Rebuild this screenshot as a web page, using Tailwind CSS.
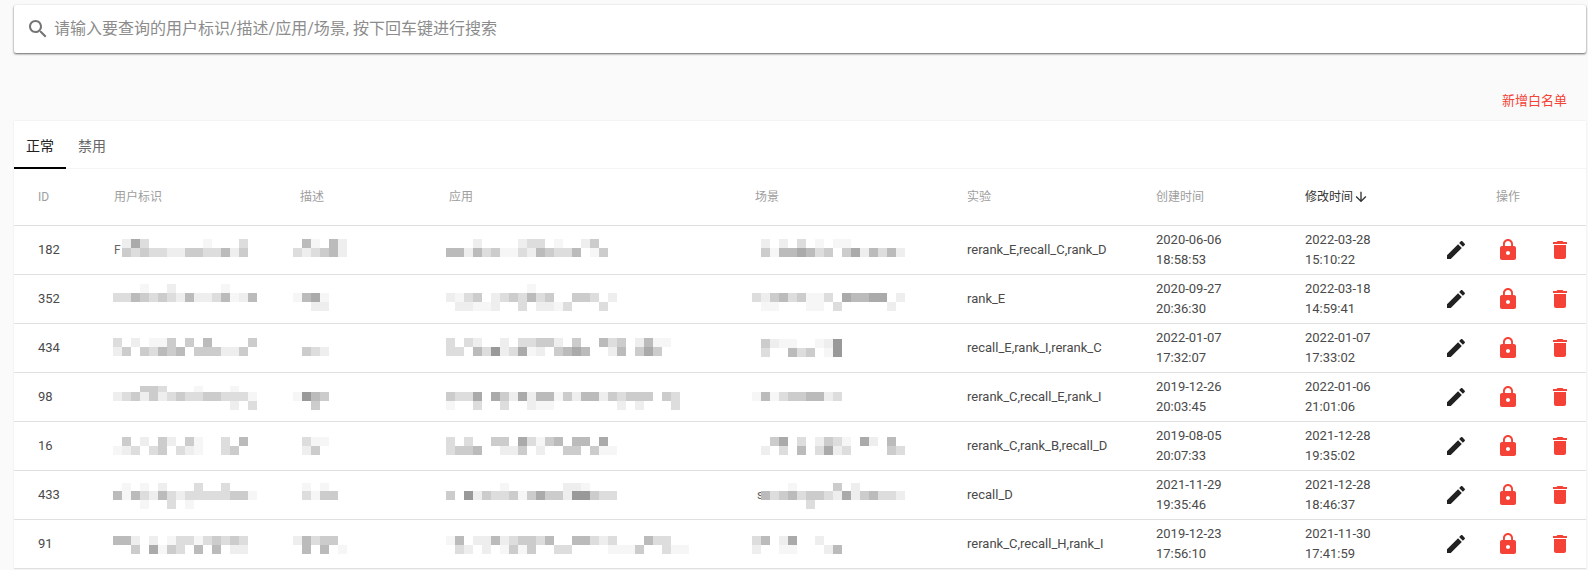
<!DOCTYPE html>
<html lang="zh">
<head>
    <meta charset="UTF-8">
    <meta name="viewport" content="width=device-width, initial-scale=1.0">
    <title>白名单</title>
    <script src="https://cdn.jsdelivr.net/npm/@tailwindcss/browser@4"></script>
</head>
<body class="bg-[#fafafa] font-[Roboto,'Noto_Sans_CJK_SC',sans-serif] h-[570px] overflow-hidden">
    <div class="pl-[14px] pt-[5px] w-[1586px]">
        <div class="bg-white h-12 rounded-[2px] flex items-center pl-3 shadow-[0_1px_2px_0_rgba(0,0,0,0.5),0_1px_3px_0_rgba(0,0,0,0.15)]">
            <svg class="w-6 h-6 fill-[#757575]" viewBox="0 0 24 24"><path d="M15.5 14h-.79l-.28-.27C15.41 12.59 16 11.11 16 9.5 16 5.91 13.09 3 9.5 3S3 5.91 3 9.5 5.91 16 9.5 16c1.61 0 3.09-.59 4.23-1.57l.27.28v.79l5 4.99L20.49 19l-4.99-5zm-6 0C7.01 14 5 11.99 5 9.5S7.01 5 9.5 5 14 7.01 14 9.5 11.99 14 9.5 14z"/></svg>
            <input type="text" class="ml-1 flex-1 text-base outline-none placeholder:text-[#8c8c8c]" placeholder="请输入要查询的用户标识/描述/应用/场景, 按下回车键进行搜索">
        </div>

        <div class="h-[68px] pt-[28px] pr-[19px] flex items-center justify-end">
            <button class="text-[13px] text-[#f44336]">新增白名单</button>
        </div>

        <div class="bg-white shadow-[0_0_2px_rgba(0,0,0,0.08)]">
            <div class="flex h-12 border-b border-[#f5f5f5]">
                <div class="w-[52px] h-12 pt-1 flex items-center justify-center text-sm text-[#212121] border-b-2 border-black">正常</div>
                <div class="w-[52px] h-12 pt-0.5 flex items-center justify-center text-sm text-[#666666]">禁用</div>
            </div>
            <div class="grid grid-cols-[100px_186px_149px_306px_212px_189px_149px_125px_156px] h-[57px] items-center border-b border-[#e0e0e0] text-xs text-[#9e9e9e]">
                <div class="pl-6">ID</div>
                <div>用户标识</div>
                <div>描述</div>
                <div>应用</div>
                <div>场景</div>
                <div>实验</div>
                <div>创建时间</div>
                <div class="flex items-center text-[#333333]">修改时间
                    <svg class="w-4 h-4 fill-[#333333]" viewBox="0 0 24 24"><path d="M20 12l-1.41-1.41L13 16.17V4h-2v12.17l-5.58-5.59L4 12l8 8 8-8z"/></svg>
                </div>
                <div class="text-center">操作</div>
            </div>
            <div id="rows"></div>
        </div>
    </div>

    <script>
        // the blurred columns: each band is [page y, one hex grey per 9px cell]
        let rows = [
            { id: 182, exp: "rerank_E,recall_C,rank_D", created: ["2020-06-06", "18:58:53"], modified: ["2022-03-28", "15:10:22"],
              user: [[239, ".ead......f...d"], [248, ".cdcddeeccddbec"]],
              desc: [[239, ".bf.be"], [248, "dedcbe"]],
              app: [[239, "...e....edd.f..ec"], [248, "bbebdcffdebcddb.fc"]],
              scene: [[239, ".e.e.d.f.ff"], [248, ".cfbbabdc.caebdbe"]], userText: "F" },
            { id: 352, exp: "rank_E", created: ["2020-09-27", "20:36:30"], modified: ["2022-03-18", "14:59:41"],
              user: [[284, "...f..e.....f"], [293, "ddbcdcdebeedbfeb"]],
              desc: [[293, "fbaf"], [302, "..ee"]],
              app: [[284, ".........f"], [293, "efdc.edcdbdc..ccd.e"], [302, ".eeffe..d.eefd...d"]],
              scene: [[293, "decbdcffd.abbaa.e"], [302, ".ff...ff.d.....e"]] },
            { id: 434, exp: "recall_E,rank_I,rerank_C", created: ["2022-01-07", "17:32:07"], modified: ["2022-01-07", "17:33:02"],
              user: [[338, "d.e.ffc.c.b....c"], [347, "ec.cdbcb.ccceec"]],
              desc: [[347, ".cde"]],
              app: [[338, "d.de..e.ddcce.c..bdc.ebff"], [347, "dd.bd9edafe.cbab..eb.cac"]],
              scene: [[339, ".ceff..fe9"], [348, ".d..bdc.f9"]] },
            { id: 98, exp: "rerank_C,recall_E,rank_I", created: ["2019-12-26", "20:03:45"], modified: ["2022-01-06", "21:01:06"],
              user: [[386, "...ccd...f...f"], [392, "edcecedcddccdddf"], [401, ".............e.d"]],
              desc: [[392, "f9bc"], [401, "..c"]],
              app: [[392, "cdda.aceaebbfcebbecdccc.cd"], [401, "f..d..d..eff.......e.e...d"]],
              scene: [[392, "fbfdccbbed"]] },
            { id: 16, exp: "rerank_C,rank_B,recall_D", created: ["2019-08-05", "20:07:33"], modified: ["2021-12-28", "19:35:02"],
              user: [[437, ".c.e.ce.cf..d.b"], [446, "fed.dc.def..dc"]],
              desc: [[437, ".dff"], [446, ".ec"]],
              app: [[437, "d.d..cc.adfcb.bb.a"], [446, "dccb..eec.e..cc.cff"]],
              scene: [[437, "..ca.d.ecdf.ae.b"], [446, ".e.d.b.daed....cd"]] },
            { id: 433, exp: "recall_D", created: ["2021-11-29", "19:35:46"], modified: ["2021-12-28", "18:46:37"],
              user: [[483, ".f.f.e...d..d"], [491, "bfbdebdedddddccf"], [500, "...f..d.f"]],
              desc: [[483, ".f.f"], [491, ".dfcc"]],
              app: [[483, "......f......eef"], [491, "c.9ecddcfcacce99cdd"]],
              scene: [[483, "....f....c.e"], [491, ".bdcbdccdeaecbdde"], [500, "......d"]], sceneText: "s" },
            { id: 91, exp: "rerank_C,recall_H,rank_I", created: ["2019-12-23", "17:56:10"], modified: ["2021-11-30", "17:41:59"],
              user: [[536, "bbe.e.fddfdcdcd"], [545, "..c.afcd.b.b.ee"]],
              desc: [[536, "ebdcc"], [545, ".b.b.f"]],
              app: [[536, "fb.eebedccdb..bbded...bdd"], [545, ".de.e.fcfc..dd....fffc..dff"]],
              scene: [[536, "db.ea..e"], [545, "e..ff...eb"]] }
        ];

        function cellColor(c) {
            return c === "f" ? "#f6f6f6" : "#" + c + c + c;
        }

        // dx: where the first cell starts, from the left of the column
        function mosaic(bands, top, dx, text, textX) {
            let rects = "";
            bands.forEach(([y, cells]) => {
                [...cells].forEach((c, i) => {
                    if (c !== ".") rects += `<rect x="${dx + i * 9}" y="${y - top}" width="9" height="9" fill="${cellColor(c)}"></rect>`;
                });
            });
            let label = text ? `<text x="${dx + textX}" y="28" font-size="12" fill="#666666">${text}</text>` : "";
            return `<svg class="block w-full h-12 overflow-visible">${label}${rects}</svg>`;
        }

        function two(lines) {
            return `<div class="leading-5">${lines[0]}<br>${lines[1]}</div>`;
        }

        const editIcon = `<svg class="w-6 h-6 fill-[#212121]" viewBox="0 0 24 24"><path d="M3 17.25V21h3.75L17.81 9.94l-3.75-3.75L3 17.25zM20.71 7.04c.39-.39.39-1.02 0-1.41l-2.34-2.34c-.39-.39-1.02-.39-1.41 0l-1.83 1.83 3.75 3.75 1.83-1.83z"/></svg>`;
        const lockIcon = `<svg class="w-6 h-6 fill-[#f44336]" viewBox="0 0 24 24"><path d="M18 8h-1V6c0-2.76-2.24-5-5-5S7 3.24 7 6v2H6c-1.1 0-2 .9-2 2v10c0 1.1.9 2 2 2h12c1.1 0 2-.9 2-2V10c0-1.1-.9-2-2-2zm-6 9c-1.1 0-2-.9-2-2s.9-2 2-2 2 .9 2 2-.9 2-2 2zm3.1-9H8.9V6c0-1.71 1.39-3.1 3.1-3.1 1.71 0 3.1 1.39 3.1 3.1v2z"/></svg>`;
        const deleteIcon = `<svg class="w-6 h-6 fill-[#f44336]" viewBox="0 0 24 24"><path d="M6 19c0 1.1.9 2 2 2h8c1.1 0 2-.9 2-2V7H6v12zM19 4h-3.5l-1-1h-5l-1 1H5v2h14V4z"/></svg>`;

        document.getElementById("rows").innerHTML = rows.map((r, i) => {
            let top = 226 + i * 49;
            return `<div class="grid grid-cols-[100px_186px_149px_306px_212px_189px_149px_125px_156px] h-[49px] items-center border-b border-[#e0e0e0] text-[13px] text-[#4a4a4a]">
                <div class="pl-6">${r.id}</div>
                <div>${mosaic(r.user, top, -1, r.userText, 1)}</div>
                <div>${mosaic(r.desc, top, -7)}</div>
                <div>${mosaic(r.app, top, -3)}</div>
                <div>${mosaic(r.scene, top, -3, r.sceneText, 5)}</div>
                <div>${r.exp}</div>
                ${two(r.created)}
                ${two(r.modified)}
                <div class="grid grid-cols-3 justify-items-center">${editIcon}${lockIcon}${deleteIcon}</div>
            </div>`;
        }).join("");
    </script>
</body>
</html>
